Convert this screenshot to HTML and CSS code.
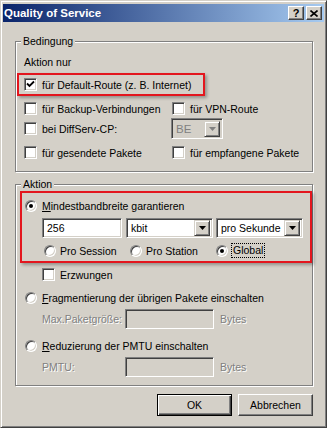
FILE: index.html
```html
<!DOCTYPE html>
<html lang="de">
<head>
    <meta charset="UTF-8">
    <title>Quality of Service</title>
    <link rel="stylesheet" href="styles.css">
</head>
<body>
    <div class="window">
        <div class="titlebar">
            <span class="title">Quality of Service</span>
            <div class="caption-buttons">
                <span class="cap-btn help">?</span>
                <span class="cap-btn">
                    <svg width="8" height="7" viewBox="0 0 8 7"><path d="M0.5 0.5 L7.5 6.5 M7.5 0.5 L0.5 6.5" stroke="#000" stroke-width="1.6" fill="none"/></svg>
                </span>
            </div>
        </div>

        <div class="content">
            <fieldset class="group cond">
                <legend>Bedingung</legend>
                <div class="caption">Aktion nur</div>
                <div class="mark mark-route">
                    <div class="row">
                        <label class="opt"><span class="check checked"><svg width="9" height="9" viewBox="0 0 9 9"><path d="M1 3.5 L3.5 6 L8 1.5" stroke="#000" stroke-width="1.8" fill="none"/></svg></span>für Default-Route (z. B. Internet)</label>
                    </div>
                </div>
                <div class="row cols r2">
                    <label class="opt col-left"><span class="check"></span>für Backup-Verbindungen</label>
                    <label class="opt"><span class="check"></span>für VPN-Route</label>
                </div>
                <div class="row cols r3">
                    <label class="opt col-left"><span class="check"></span>bei DiffServ-CP:</label>
                    <div class="combo disabled be">
                        <span class="combo-value">BE</span>
                        <span class="combo-btn"><svg width="7" height="4" viewBox="0 0 7 4"><polygon points="0,0 7,0 3.5,4" fill="#808080"/></svg></span>
                    </div>
                </div>
                <div class="row cols r4">
                    <label class="opt col-left"><span class="check"></span>für gesendete Pakete</label>
                    <label class="opt"><span class="check"></span>für empfangene Pakete</label>
                </div>
            </fieldset>

            <fieldset class="group act">
                <legend>Aktion</legend>
                <div class="mark mark-bw">
                    <div class="row">
                        <label class="opt"><span class="radio on"></span><span><u>M</u>indestbandbreite garantieren</span></label>
                    </div>
                    <div class="field-row">
                        <div class="field w-amount">256</div>
                        <div class="combo w-unit">
                            <span class="combo-value">kbit</span>
                            <span class="combo-btn"><svg width="7" height="4" viewBox="0 0 7 4"><polygon points="0,0 7,0 3.5,4" fill="#000"/></svg></span>
                        </div>
                        <div class="combo w-unit">
                            <span class="combo-value">pro Sekunde</span>
                            <span class="combo-btn"><svg width="7" height="4" viewBox="0 0 7 4"><polygon points="0,0 7,0 3.5,4" fill="#000"/></svg></span>
                        </div>
                    </div>
                    <div class="row scope">
                        <label class="opt scope-item"><span class="radio"></span>Pro Session</label>
                        <label class="opt scope-item"><span class="radio"></span>Pro Station</label>
                        <label class="opt scope-item"><span class="radio on"></span><span class="focus">Global</span></label>
                    </div>
                </div>
                <div class="row forced">
                    <label class="opt"><span class="check"></span>Erzwungen</label>
                </div>
                <div class="row radio-row frag">
                    <label class="opt"><span class="radio"></span><span><u>F</u>ragmentierung der übrigen Pakete einschalten</span></label>
                </div>
                <div class="param-row">
                    <span class="param-label dim">Max.Paketgröße:</span>
                    <div class="field disabled w-param"></div>
                    <span class="dim unit">Bytes</span>
                </div>
                <div class="row radio-row pmtu">
                    <label class="opt"><span class="radio"></span><span><u>R</u>eduzierung der PMTU einschalten</span></label>
                </div>
                <div class="param-row">
                    <span class="param-label dim">PMTU:</span>
                    <div class="field disabled w-param"></div>
                    <span class="dim unit">Bytes</span>
                </div>
            </fieldset>

            <div class="buttons">
                <button class="btn default" type="button">OK</button>
                <button class="btn" type="button">Abbrechen</button>
            </div>
        </div>
    </div>
</body>
</html>
```

FILE: styles.css
```css
* {
    box-sizing: border-box;
}
body {
    margin: 0;
    font-family: "Liberation Sans", Arial, sans-serif;
    font-size: 10.5px;
    color: #000;
    background: #D4D0C8;
}
.window {
    width: 327px;
    height: 428px;
    background: #D4D0C8;
    border: 1px solid;
    border-color: #D4D0C8 #404040 #404040 #D4D0C8;
    box-shadow: inset 1px 1px #fff, inset -1px -1px #808080;
    padding: 3px 2px 2px 2px;
}
.titlebar {
    height: 18px;
    display: flex;
    align-items: center;
    justify-content: space-between;
    background: linear-gradient(to right, #0A246A, #A6CAF0);
    padding: 0 2px 0 1px;
}
.title {
    color: #fff;
    font-weight: bold;
    font-size: 11.5px;
}
.caption-buttons {
    display: flex;
    gap: 2px;
}
.cap-btn {
    width: 16px;
    height: 14px;
    display: flex;
    align-items: center;
    justify-content: center;
    background: #D4D0C8;
    border: 1px solid;
    border-color: #fff #404040 #404040 #fff;
    box-shadow: inset -1px -1px #808080;
}
.cap-btn.help {
    font-weight: bold;
    font-size: 11px;
    line-height: 12px;
}

.content {
    padding: 13px 0 0 12px;
}

/* group boxes */
.group {
    width: 298px;
    min-width: 0;
    margin: 0;
    padding: 0;
    border: 1px solid #808080;
    box-shadow: inset 1px 1px #fff, 1px 1px #fff;
}
.group legend {
    margin-left: 5px;
    padding: 0 2px;
    line-height: 13px;
    background: #D4D0C8;
}
.group.cond {
    padding-bottom: 12px;
}
.group.act {
    margin-top: 6px;
    padding-bottom: 8px;
}

/* red annotation frames */
.mark {
    border: 2px solid #E3161E;
    box-shadow: 2px 2px 3px rgba(0, 0, 0, 0.3);
}
.mark-route {
    width: 188px;
    margin: 4px 0 0 1px;
    padding: 3px 0 3px 5px;
}
.mark-bw {
    width: 292px;
    height: 72px;
    margin-left: 4px;
    padding: 6px 0 0 3px;
}

.row {
    display: flex;
    align-items: center;
    height: 13px;
}
.caption {
    margin-top: 8px;
    padding-left: 8px;
    line-height: 13px;
}
.cols {
    padding-left: 8px;
}
.col-left {
    width: 148px;
}
.r2 {
    margin-top: 6px;
}
.r3 {
    margin-top: 3px;
    height: 21px;
}
.r4 {
    margin-top: 7px;
}
.opt {
    display: flex;
    align-items: center;
    gap: 5px;
    white-space: nowrap;
}

/* checkbox and radio */
.check {
    flex: none;
    width: 13px;
    height: 13px;
    display: flex;
    align-items: center;
    justify-content: center;
    background: #fff;
    border: 1px solid;
    border-color: #808080 #fff #fff #808080;
    box-shadow: inset 1px 1px #404040, inset -1px -1px #D4D0C8;
}
.radio {
    flex: none;
    position: relative;
    width: 12px;
    height: 12px;
    border-radius: 50%;
    background: #fff;
    border: 1px solid;
    border-color: #808080 #fff #fff #808080;
    box-shadow: inset 1px 1px #404040, inset -1px -1px #D4D0C8;
}
.radio.on::after {
    content: "";
    position: absolute;
    left: 3px;
    top: 3px;
    width: 4px;
    height: 4px;
    border-radius: 50%;
    background: #000;
}

/* fields */
.field,
.combo {
    height: 20px;
    display: flex;
    align-items: center;
    background: #fff;
    border: 1px solid;
    border-color: #808080 #fff #fff #808080;
    box-shadow: inset 1px 1px #404040, inset -1px -1px #D4D0C8;
    padding: 2px;
}
.field {
    padding-left: 4px;
}
.combo-value {
    padding-left: 2px;
    white-space: nowrap;
}
.combo-btn {
    margin-left: auto;
    flex: none;
    width: 16px;
    height: 16px;
    display: flex;
    align-items: center;
    justify-content: center;
    background: #D4D0C8;
    border: 1px solid;
    border-color: #D4D0C8 #404040 #404040 #D4D0C8;
    box-shadow: inset 1px 1px #fff, inset -1px -1px #808080;
}
.combo.disabled,
.field.disabled {
    background: #D4D0C8;
    color: #808080;
}
.be {
    width: 52px;
    height: 21px;
    margin-left: -1px;
    font-size: 11.5px;
}

.field-row {
    display: flex;
    margin: 6px 0 0 17px;
    gap: 4px;
}
.w-amount {
    width: 80px;
}
.w-unit {
    width: 87px;
}
.w-unit + .w-unit {
    margin-left: -1px;
}
.scope {
    margin: 6px 0 0 19px;
}
.scope-item {
    width: 86px;
    gap: 4px;
}
.scope-item:last-child {
    gap: 3px;
}
.focus {
    border: 1px dotted #000;
    padding: 0 1px;
    line-height: 13px;
}

.forced {
    margin-top: 5px;
    padding-left: 26px;
}
.radio-row {
    padding-left: 9px;
}
.frag {
    margin-top: 10px;
}
.pmtu {
    margin-top: 10px;
}
.param-row {
    display: flex;
    align-items: center;
    margin-top: 5px;
    padding-left: 26px;
}
.param-label {
    width: 83px;
}
.w-param {
    width: 89px;
}
.unit {
    margin-left: 6px;
}
.dim {
    color: #808080;
    text-shadow: 1px 1px #fff;
}

/* dialog buttons */
.buttons {
    width: 298px;
    margin-top: 8px;
    display: flex;
    justify-content: flex-end;
    gap: 6px;
}
.btn {
    width: 75px;
    height: 22px;
    font-family: "Liberation Sans", Arial, sans-serif;
    font-size: 10.5px;
    color: #000;
    background: #D4D0C8;
    border: 1px solid;
    border-color: #fff #404040 #404040 #fff;
    box-shadow: inset -1px -1px #808080;
    padding: 0;
}
.btn.default {
    border: 1px solid #000;
    box-shadow: inset 1px 1px #fff, inset -1px -1px #404040, inset -2px -2px #808080;
}
```
